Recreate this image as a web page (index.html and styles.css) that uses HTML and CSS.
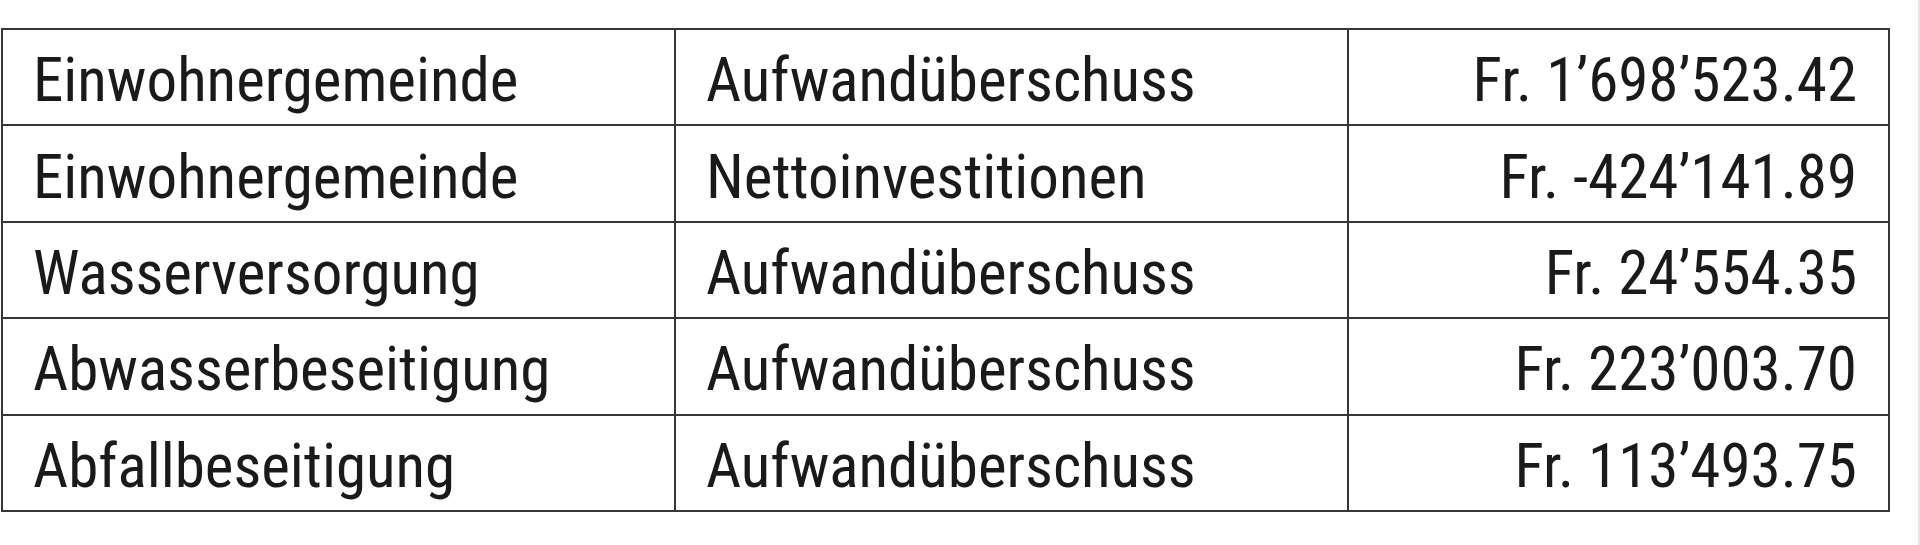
FILE: index.html
```html
<!DOCTYPE html>
<html lang="de">
<head>
<meta charset="utf-8">
<title>Rechnung</title>
<link rel="stylesheet" href="styles.css">
</head>
<body>
<div class="page">
  <table class="summary">
    <colgroup>
      <col class="c-unit">
      <col class="c-kind">
      <col class="c-amount">
    </colgroup>
    <tbody>
      <tr><td>Einwohnergemeinde</td><td>Aufwandüberschuss</td><td class="amount">Fr. 1’698’523.42</td></tr>
      <tr><td>Einwohnergemeinde</td><td>Nettoinvestitionen</td><td class="amount">Fr. -424’141.89</td></tr>
      <tr><td>Wasserversorgung</td><td>Aufwandüberschuss</td><td class="amount">Fr. 24’554.35</td></tr>
      <tr><td>Abwasserbeseitigung</td><td>Aufwandüberschuss</td><td class="amount">Fr. 223’003.70</td></tr>
      <tr><td>Abfallbeseitigung</td><td>Aufwandüberschuss</td><td class="amount">Fr. 113’493.75</td></tr>
    </tbody>
  </table>
  <div class="edge"></div>
</div>
</body>
</html>
```
FILE: styles.css
```css
html, body {
  margin: 0;
  padding: 0;
  background: #ffffff;
}

.page {
  display: flex;
  align-items: flex-start;
  width: 1920px;
  height: 545px;
  overflow: hidden;
}

.summary {
  margin: 28px 0 0 1px;
  width: 1887px;
  border-collapse: collapse;
  table-layout: fixed;
  font-family: "Roboto Condensed", "Roboto", sans-serif;
  font-size: 61px;
  font-weight: 400;
  color: #1a1a1a;
  flex: none;
}

.c-unit { width: 673px; }
.c-kind { width: 673px; }
.c-amount { width: 541px; }

.summary td {
  height: 96.4px;
  border: 2px solid #363636;
  padding: 6px 30px 0 30px;
  line-height: 70px;
  white-space: nowrap;
  vertical-align: middle;
  box-sizing: border-box;
}

.summary td.amount {
  text-align: right;
  padding-right: 31px;
}

.edge {
  margin-left: 28px;
  width: 2px;
  height: 545px;
  background: #e6e6e6;
  flex: none;
}
```
